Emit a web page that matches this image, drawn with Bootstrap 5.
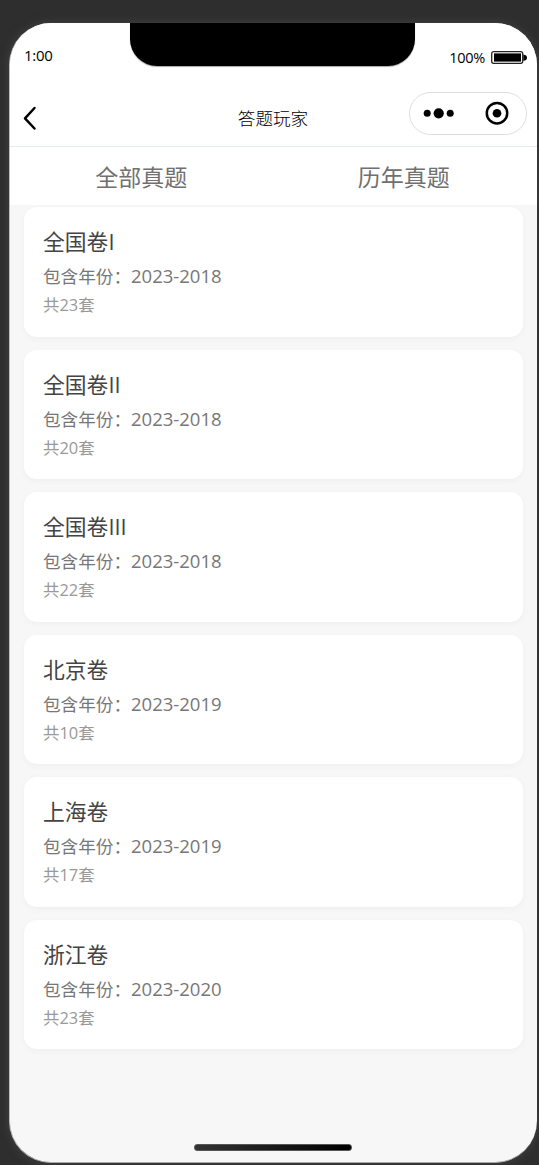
<!DOCTYPE html>
<html lang="zh-CN">
<head>
<meta charset="utf-8">
<meta name="viewport" content="width=device-width, initial-scale=1">
<title>答题玩家</title>
<link href="https://cdn.jsdelivr.net/npm/bootstrap@5.3.0/dist/css/bootstrap.min.css" rel="stylesheet">
<style>
body{background:#2e2e2e;font-family:"Open Sans","Noto Sans CJK SC",sans-serif;height:1165px;overflow:hidden;padding:23px 2px 0 9px}
.phone{height:1140px;background:#f7f7f7;border-radius:42px;border-left:1px solid #bbb;border-bottom:1px solid #aaa;box-shadow:0 0 10px #444}
.status-bar{height:62px;padding:0 10px 0 14px;color:#000;font-size:15px;line-height:20px}
.status-bar .clock{margin-top:22px;letter-spacing:-.3px}
.status-bar .power{margin-top:25px;font-size:14.5px;letter-spacing:-.3px;gap:5px}
.notch{width:285px;height:43px;left:120px;top:0;background:#000;border-radius:0 0 27px 27px;box-shadow:0 1px 1px #aaa}
.title-bar{height:62px;border-bottom:1px solid #e6ebfa;color:#000}
.title-bar h1{font-size:17.6px;line-height:24px;margin:21px 1px 0 0;font-weight:300}
.back{left:13px;top:21px}
.capsule{right:10px;top:7px;width:118px;height:43px;border:1.5px solid #ddd;border-radius:22px}
.tabs{height:58px;color:#707070;font-size:23px;line-height:32px;padding:2px 2px 0 0}
.papers{padding:2px 14px 0 14px;gap:13px}
.paper{height:129.5px;border:0;border-radius:13px;padding:19px 19px 0;box-shadow:0 2px 6px rgba(0,0,0,.035)}
.paper h2{font-size:21.8px;line-height:32px;color:#444;margin:0}
.years{font-size:17.6px;line-height:26px;color:#777;margin:5px 0 0}
.years span{font-size:18.5px;line-height:1}
.sets{font-size:16.4px;line-height:24px;color:#999;margin:4px 0 0}
.home-line{width:158px;height:7px;left:184px;bottom:11px;border-radius:3px;background:linear-gradient(90deg,#333,#000);border:1px solid #555}
</style>
</head>
<body>
<main class="phone position-relative overflow-hidden d-flex flex-column">
  <div class="status-bar bg-white d-flex justify-content-between align-items-start">
    <div class="clock">1:00</div>
    <div class="notch position-absolute"></div>
    <div class="power d-flex align-items-center"><span>100%</span>
      <svg width="37" height="14" viewBox="0 0 37 14"><rect x="1.7" y=".7" width="31" height="11.6" rx="2" fill="#fff" stroke="#222" stroke-width="1.3"/><rect x="4" y="2.4" width="27" height="8.2" fill="#000"/><path d="M33.3 3.5Q37 4 37 6.7T33.3 10Z"/></svg>
    </div>
  </div>
  <header class="title-bar bg-white position-relative d-flex justify-content-center align-items-start">
    <svg class="back position-absolute" width="14" height="25" viewBox="0 0 14 25" fill="none" stroke="#000" stroke-width="2.5" stroke-linecap="round" stroke-linejoin="round"><path d="M11.5 2 2 12.3l9.5 10.2"/></svg>
    <h1>答题玩家</h1>
    <div class="capsule position-absolute">
      <svg class="d-block" width="115" height="40" viewBox="0 0 115 40"><circle cx="17.2" cy="20.3" r="3.5"/><circle cx="28.7" cy="20.3" r="5.1"/><circle cx="40.2" cy="20.3" r="3.5"/><circle cx="87" cy="20.2" r="10.2" fill="none" stroke="#000" stroke-width="2.5"/><circle cx="87" cy="20.2" r="4.3"/></svg>
    </div>
  </header>
  <nav class="tabs bg-white d-flex align-items-center text-center"><div class="col-6">全部真题</div><div class="col-6">历年真题</div></nav>
  <section class="papers d-flex flex-column">
    <article class="paper card"><h2 class="fw-normal">全国卷I</h2><p class="years">包含年份：<span>2023-2018</span></p><p class="sets">共23套</p></article>
    <article class="paper card"><h2 class="fw-normal">全国卷II</h2><p class="years">包含年份：<span>2023-2018</span></p><p class="sets">共20套</p></article>
    <article class="paper card"><h2 class="fw-normal">全国卷III</h2><p class="years">包含年份：<span>2023-2018</span></p><p class="sets">共22套</p></article>
    <article class="paper card"><h2 class="fw-normal">北京卷</h2><p class="years">包含年份：<span>2023-2019</span></p><p class="sets">共10套</p></article>
    <article class="paper card"><h2 class="fw-normal">上海卷</h2><p class="years">包含年份：<span>2023-2019</span></p><p class="sets">共17套</p></article>
    <article class="paper card"><h2 class="fw-normal">浙江卷</h2><p class="years">包含年份：<span>2023-2020</span></p><p class="sets">共23套</p></article>
  </section>
  <div class="home-line position-absolute"></div>
</main>
<script src="https://cdn.jsdelivr.net/npm/bootstrap@5.3.0/dist/js/bootstrap.bundle.min.js"></script>
</body>
</html>
